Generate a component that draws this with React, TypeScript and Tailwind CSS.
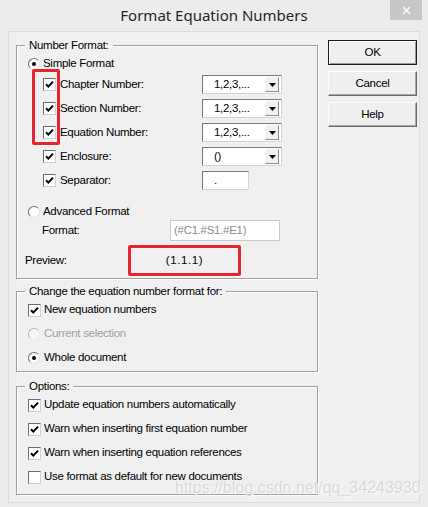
import type { ReactNode } from "react";

function Check({ checked = true }: { checked?: boolean }) {
    return (
        <span className="flex items-center justify-center w-[13px] h-[13px] shrink-0 bg-white border border-t-[#6e6e6e] border-l-[#6e6e6e] border-b-[#cfcfcf] border-r-[#cfcfcf]">
            {checked && (
                <svg width="11" height="11" viewBox="0 0 11 11" fill="none">
                    <path d="M2 5.2 L4.3 7.6 L9 2.6" stroke="#000" strokeWidth="2" />
                </svg>
            )}
        </span>
    );
}

function Radio({ selected = false, disabled = false }: { selected?: boolean; disabled?: boolean }) {
    return (
        <span
            className={
                disabled
                    ? "flex items-center justify-center w-[12px] h-[12px] shrink-0 rounded-full bg-[#f7f7f7] border border-t-[#b5b5b5] border-l-[#b5b5b5] border-b-[#ececec] border-r-[#ececec]"
                    : "flex items-center justify-center w-[12px] h-[12px] shrink-0 rounded-full bg-white border border-t-[#6e6e6e] border-l-[#6e6e6e] border-b-[#e3e3e3] border-r-[#e3e3e3]"
            }
        >
            {selected && <span className="w-[4px] h-[4px] rounded-full bg-black" />}
        </span>
    );
}

function Dropdown({ value }: { value: string }) {
    return (
        <div className="flex items-center shrink-0 w-[80px] h-[19px] bg-white border border-t-[#7a7a7a] border-l-[#7a7a7a] border-b-[#d4d4d4] border-r-[#d4d4d4]">
            <span className="flex-1 pl-[11px] leading-none">{value}</span>
            <span className="flex items-center justify-center w-[14px] h-[15px] mr-[2px] bg-[#f0f0f0] border border-t-[#f4f4f4] border-l-[#f4f4f4] border-b-[#8a8a8a] border-r-[#8a8a8a]">
                <svg width="7" height="4" viewBox="0 0 7 4">
                    <path d="M0 0 H7 L3.5 4 Z" fill="#000" />
                </svg>
            </span>
        </div>
    );
}

function Group({ title, children, className }: { title: string; children: ReactNode; className?: string }) {
    return (
        <fieldset
            className={
                "relative border border-[#a0a0a0] shadow-[1px_1px_0_#fff,inset_1px_1px_0_#fff] " + (className ?? "")
            }
        >
            <legend className="ml-[8px] px-[4px] leading-[14px]">{title}</legend>
            {children}
        </fieldset>
    );
}

function Button({ label, primary = false }: { label: string; primary?: boolean }) {
    return (
        <button
            type="button"
            className={
                primary
                    ? "h-[25px] w-full bg-[#efefef] border border-[#1c1c1c] shadow-[inset_1px_1px_0_#fff,inset_-1px_-1px_0_#9a9a9a]"
                    : "h-[25px] w-full bg-[#efefef] border border-t-[#fcfcfc] border-l-[#fcfcfc] border-b-[#6a6a6a] border-r-[#6a6a6a] shadow-[inset_-1px_-1px_0_#a8a8a8]"
            }
        >
            {label}
        </button>
    );
}

const numberRows = [
    { label: "Chapter Number:", value: "1,2,3,..." },
    { label: "Section Number:", value: "1,2,3,..." },
    { label: "Equation Number:", value: "1,2,3,..." },
    { label: "Enclosure:", value: "()" },
];

const optionRows = [
    { label: "Update equation numbers automatically", checked: true },
    { label: "Warn when inserting first equation number", checked: true },
    { label: "Warn when inserting equation references", checked: true },
    { label: "Use format as default for new documents", checked: false },
];

export default function App() {
    return (
        <div className="relative w-[428px] h-[507px] overflow-hidden bg-[#ececec] text-[11.5px] tracking-[-0.3px] text-black font-['Liberation_Sans',sans-serif]">
            {/* Title bar */}
            <div className="relative h-[31px] flex items-center justify-center">
                <span className="text-[15px] tracking-normal text-[#262626] font-['Noto_Sans','Open_Sans',sans-serif]">
                    Format Equation Numbers
                </span>
                <button
                    type="button"
                    className="absolute right-[6px] top-0 w-[32px] h-[20px] bg-[#c7c7c7] flex items-center justify-center"
                >
                    <svg width="9" height="9" viewBox="0 0 9 9">
                        <path d="M1 1 L8 8 M8 1 L1 8" stroke="#fff" strokeWidth="1.4" />
                    </svg>
                </button>
            </div>

            {/* Client area */}
            <div className="mx-[8px] h-[472px] bg-[#f0f0f0] border border-[#dcdcdc] flex gap-[10px] pl-[7px] pt-[6px]">
                <div className="w-[302px] flex flex-col">
                    <Group title="Number Format:">
                        <div className="flex items-center h-[23px] pl-[11px] gap-[3px]">
                            <Radio selected />
                            <span>Simple Format</span>
                        </div>
                        <div className="flex flex-col gap-[5px]">
                            {numberRows.map((r) => (
                                <div key={r.label} className="flex items-center h-[19px] pl-[26px]">
                                    <Check />
                                    <span className="w-[146px] shrink-0 pl-[4px]">{r.label}</span>
                                    <Dropdown value={r.value} />
                                </div>
                            ))}
                            <div className="flex items-center h-[19px] pl-[26px]">
                                <Check />
                                <span className="w-[146px] shrink-0 pl-[4px]">Separator:</span>
                                <div className="w-[47px] h-[19px] pl-[11px] leading-[17px] bg-white border border-t-[#7a7a7a] border-l-[#7a7a7a] border-b-[#d4d4d4] border-r-[#d4d4d4]">
                                    .
                                </div>
                            </div>
                        </div>
                        <div className="flex items-center h-[16px] mt-[14px] pl-[11px] gap-[3px]">
                            <Radio />
                            <span>Advanced Format</span>
                        </div>
                        <div className="flex items-center h-[21px] pl-[25px]">
                            <span className="w-[128px] shrink-0">Format:</span>
                            <div className="w-[110px] h-[21px] pl-[3px] leading-[19px] bg-white border border-[#c9c9c9] text-[#8c8c8c]">
                                (#C1.#S1.#E1)
                            </div>
                        </div>
                        <div className="flex items-center h-[31px] mt-[4px] mb-[2px] pl-[8px]">
                            <span className="w-[103px] shrink-0">Preview:</span>
                            <div className="w-[113px] h-[31px] shrink-0 flex items-center justify-center border-[3px] border-[#e3262f] rounded-[2px] tracking-[0.6px]">
                                (1.1.1)
                            </div>
                        </div>
                        {/* red annotation around first three checkboxes */}
                        <div className="absolute left-[15px] top-[17px] w-[28px] h-[76px] border-[3px] border-[#e3262f] rounded-[2px]" />
                    </Group>

                    <Group title="Change the equation number format for:" className="mt-[5px] pb-[1px]">
                        <div className="flex items-center h-[24px] pl-[11px] gap-[3px]">
                            <Check />
                            <span>New equation numbers</span>
                        </div>
                        <div className="flex items-center h-[24px] pl-[11px] gap-[4px] text-[#a0a0a0]">
                            <Radio disabled />
                            <span>Current selection</span>
                        </div>
                        <div className="flex items-center h-[24px] pl-[11px] gap-[4px]">
                            <Radio selected />
                            <span>Whole document</span>
                        </div>
                    </Group>

                    <Group title="Options:" className="mt-[7px] pb-[5px]">
                        {optionRows.map((r) => (
                            <div key={r.label} className="flex items-center h-[24px] pl-[11px] gap-[3px]">
                                <Check checked={r.checked} />
                                <span>{r.label}</span>
                            </div>
                        ))}
                    </Group>
                </div>

                <div className="w-[89px] flex flex-col gap-[6px] mt-[2px]">
                    <Button label="OK" primary />
                    <Button label="Cancel" />
                    <Button label="Help" />
                </div>
            </div>

            {/* watermark */}
            <div className="absolute left-[175px] top-[478px] text-[16px] leading-[20px] tracking-normal text-[#dadada] [text-shadow:1px_1px_0_#fbfbfb] font-['Liberation_Sans',sans-serif]">
                https://blog.csdn.net/qq_34243930
            </div>
        </div>
    );
}
